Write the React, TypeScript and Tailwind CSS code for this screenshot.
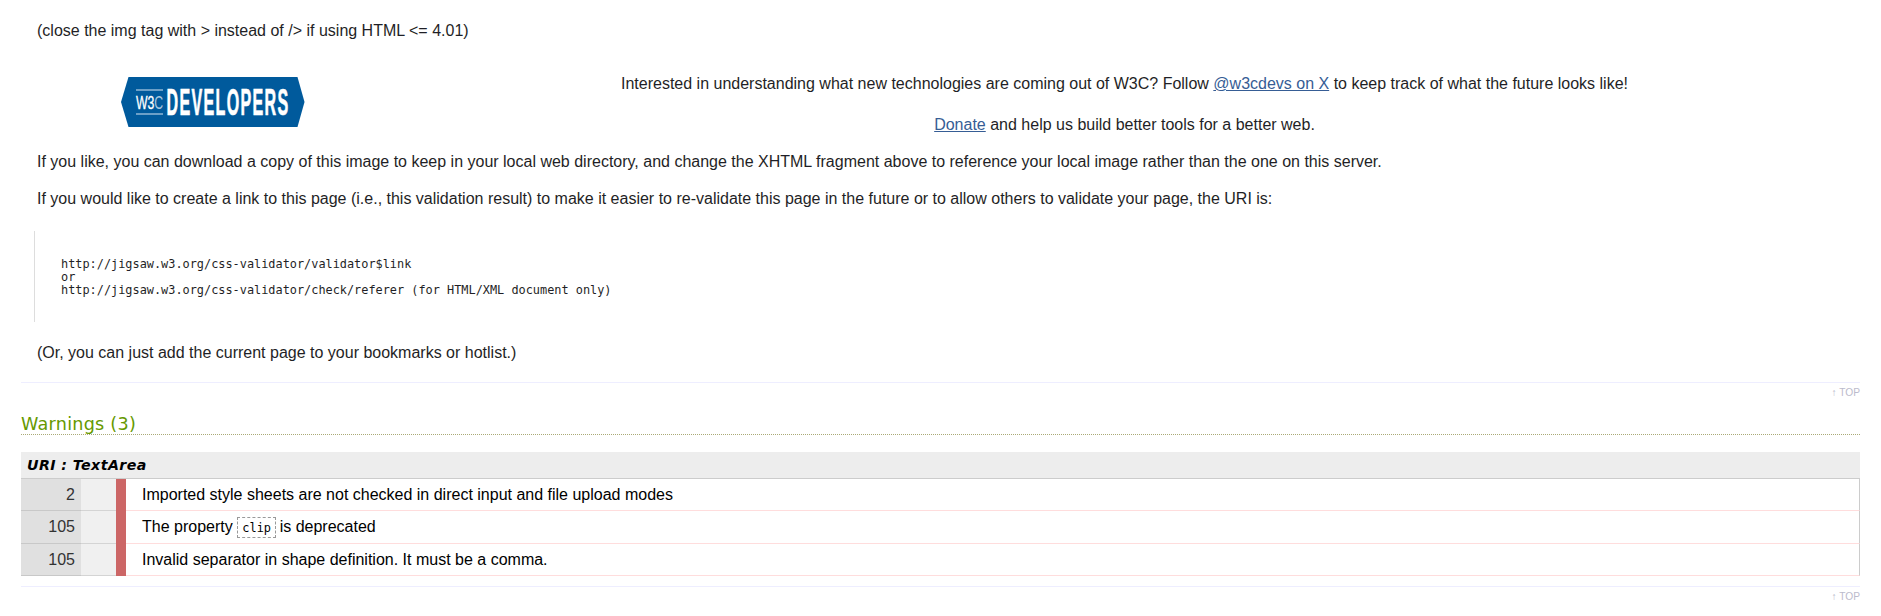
import type { ReactNode } from 'react';

const warnings: { line: string; message: ReactNode; height: string }[] = [
  {
    line: '2',
    message: 'Imported style sheets are not checked in direct input and file upload modes',
    height: 'h-8',
  },
  {
    line: '105',
    message: (
      <>
        The property{' '}
        <code className="-mr-px inline-block h-[21px] w-[39px] border border-dashed border-[#999] text-center align-baseline font-['DejaVu_Sans_Mono',monospace] text-[11.9px] leading-5">
          clip
        </code>{' '}
        is deprecated
      </>
    ),
    height: 'h-[33px]',
  },
  {
    line: '105',
    message: 'Invalid separator in shape definition. It must be a comma.',
    height: 'h-8',
  },
];

function DevelopersLogo() {
  return (
    <svg width="184" height="50" viewBox="0 0 184 50" className="block" role="img">
      <path d="M7.5 0H176.5L183.5 25L176.5 50H7.5L0 25Z" fill="#005a9c" />
      <path d="M15 13H42M15 37H42" stroke="#8fb6d5" strokeWidth="1.4" />
      <g fill="#fff" fontFamily="'Liberation Sans Narrow', 'Liberation Sans', sans-serif">
        <text transform="translate(15 31.5) scale(0.68 1)" fontSize="18" stroke="#fff" strokeWidth="0.3">
          W3<tspan fill="#a9c7df" stroke="none">C</tspan>
        </text>
        <text
          transform="translate(45.5 37.8) scale(0.446 1)"
          fontSize="36"
          fontWeight="bold"
          letterSpacing="3"
          stroke="#fff"
          strokeWidth="0.7"
        >
          DEVELOPERS
        </text>
      </g>
    </svg>
  );
}

function TopLink() {
  return (
    <div className="flex h-5 justify-end border-t border-[#eeeeff] pt-1 text-[10.2px] leading-3 text-[#bbbbcc]">
      <a>↑ TOP</a>
    </div>
  );
}

export default function App() {
  return (
    <main className="flex h-[616px] flex-col overflow-hidden bg-white px-[21px] font-['Liberation_Sans',Arial,sans-serif] text-base leading-5 text-[#1f1f26]">
      <section className="flex flex-col pt-[21px] pl-4">
        <p>(close the img tag with &gt; instead of /&gt; if using HTML &lt;= 4.01)</p>
        <div className="mt-[33px] flex h-[77px]">
          <div className="w-[386.5px] pt-[3px] pl-[84px]">
            <DevelopersLogo />
          </div>
          <div className="flex w-[1402px] flex-col items-center gap-[21px] text-center">
            <p>
              Interested in understanding what new technologies are coming out of W3C? Follow{' '}
              <a className="text-[#365d95] underline">@w3cdevs on X</a> to keep track of what the future looks like!
            </p>
            <p>
              <a className="text-[#365d95] underline">Donate</a> and help us build better tools for a better web.
            </p>
          </div>
        </div>
        <p className="mt-px">
          If you like, you can download a copy of this image to keep in your local web directory, and change the XHTML
          fragment above to reference your local image rather than the one on this server.
        </p>
        <p className="mt-[17px]">
          If you would like to create a link to this page (i.e., this validation result) to make it easier to
          re-validate this page in the future or to allow others to validate your page, the URI is:
        </p>
        <pre className="mt-[22px] -ml-[3px] h-[91px] border-l border-[#ddd] pt-[27px] pl-[26px] font-['DejaVu_Sans_Mono',monospace] text-[11.88px] leading-[13px]">
          {`http://jigsaw.w3.org/css-validator/validator$link
or
http://jigsaw.w3.org/css-validator/check/referer (for HTML/XML document only)`}
        </pre>
        <p className="mt-[21px]">(Or, you can just add the current page to your bookmarks or hotlist.)</p>
      </section>

      <div className="mt-[19px]">
        <TopLink />
      </div>

      <section className="mt-2.5 flex flex-col">
        <h3 className="h-[23px] border-b border-dotted border-[#aaaa77] font-['DejaVu_Sans',Verdana,sans-serif] text-[17.6px] leading-6 tracking-[0.25px] text-[#669900]">
          Warnings (3)
        </h3>
        <h4 className="mt-[17px] h-[27px] border-b border-[#ccc] bg-[#ededed] pl-1.5 font-['DejaVu_Sans',Verdana,sans-serif] text-[14.2px] leading-[26px] font-bold tracking-[0.42px] text-black italic">
          URI : TextArea
        </h4>
        <div className="flex flex-col">
          {warnings.map((w, i) => (
            <div key={i} className={`flex ${w.height} leading-8`}>
              <div className="w-[60px] border-b border-[#c8c8c8] bg-[#e0e0e0] pr-1.5 text-right text-[#333]">
                {w.line}
              </div>
              <div className="w-[35px] border-b border-[#d4d4d4] bg-[#f0f0f0]" />
              <div className="w-2.5 bg-[#cc6666]" />
              <div className="flex-1 border-r border-b border-r-[#ccc] border-b-[#ffdddd] pl-4 text-black">
                {w.message}
              </div>
            </div>
          ))}
        </div>
      </section>

      <div className="mt-2.5">
        <TopLink />
      </div>
    </main>
  );
}
